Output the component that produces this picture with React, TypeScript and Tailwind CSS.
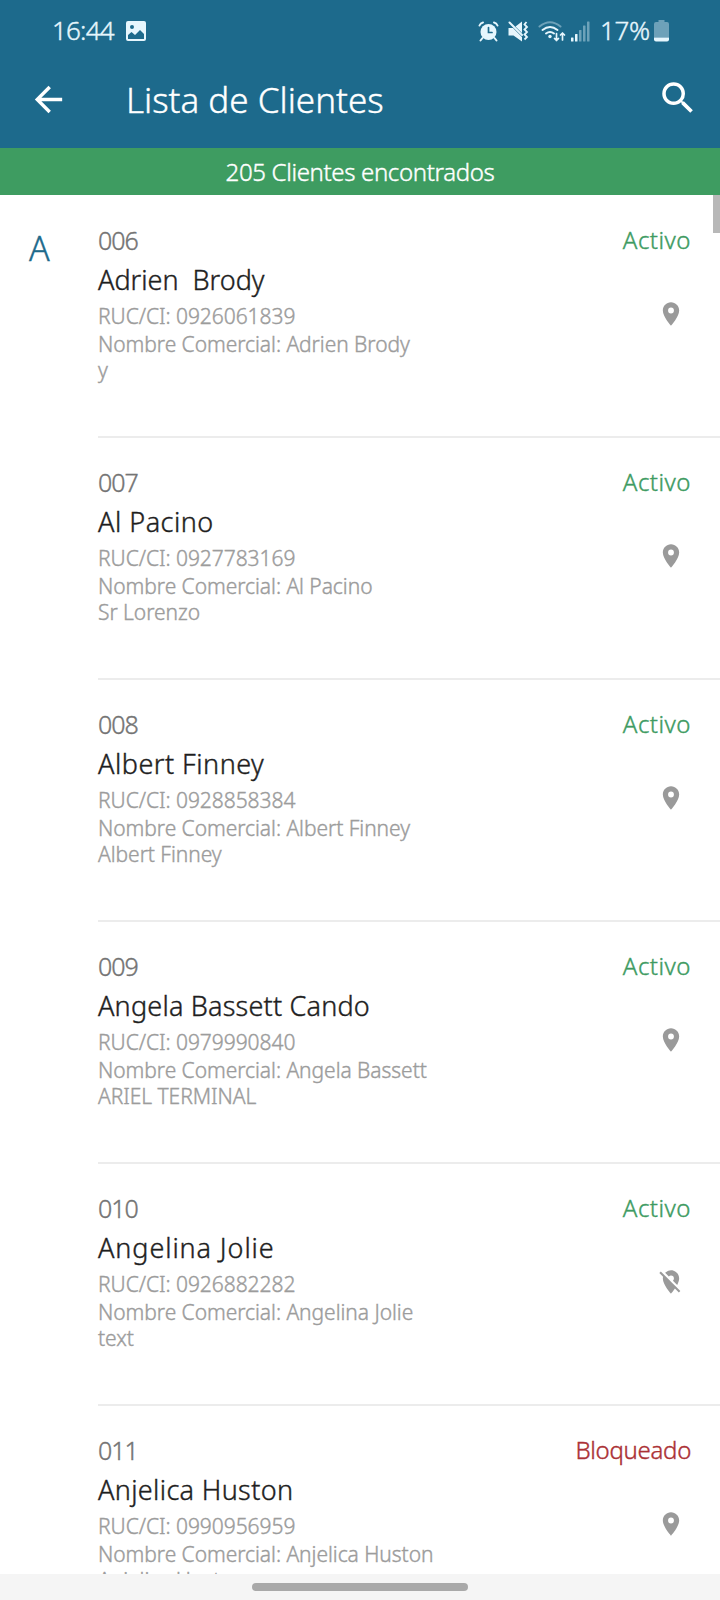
import React from 'react';
import { MdArrowBack, MdLocationOff, MdLocationOn, MdSearch } from 'react-icons/md';

interface Client {
  code: string;
  name: string;
  ruc: string;
  tradeName: string;
  detail: string;
  nameSpacing?: string;
  blocked?: boolean;
  noLocation?: boolean;
}

const clients: Client[] = [
  { code: '006', name: 'Adrien  Brody', ruc: '0926061839', tradeName: 'Adrien Brody', detail: 'y' },
  { code: '007', name: 'Al Pacino', ruc: '0927783169', tradeName: 'Al Pacino', detail: 'Sr Lorenzo', nameSpacing: 'tracking-[0.5px]' },
  { code: '008', name: 'Albert Finney', ruc: '0928858384', tradeName: 'Albert Finney', detail: 'Albert Finney', nameSpacing: 'tracking-[0.5px]' },
  { code: '009', name: 'Angela Bassett Cando', ruc: '0979990840', tradeName: 'Angela Bassett', detail: 'ARIEL TERMINAL', nameSpacing: 'tracking-[0.2px]' },
  { code: '010', name: 'Angelina Jolie', ruc: '0926882282', tradeName: 'Angelina Jolie', detail: 'text', nameSpacing: 'tracking-[0.9px]', noLocation: true },
  { code: '011', name: 'Anjelica Huston', ruc: '0990956959', tradeName: 'Anjelica Huston', detail: 'Anjelica Huston', nameSpacing: 'tracking-[0.35px]', blocked: true },
];

const PictureIcon = () => (
  <svg className="h-5 w-5" viewBox="0 0 20 20">
    <path
      fill="currentColor"
      fillRule="evenodd"
      d="M2 0h16a2 2 0 0 1 2 2v16a2 2 0 0 1-2 2H2a2 2 0 0 1-2-2V2a2 2 0 0 1 2-2ZM6 4a2 2 0 1 0 0 4 2 2 0 0 0 0-4ZM2 14v4h16v-5l-4-4-5 5-3.500-3Z"
    />
  </svg>
);

const AlarmIcon = () => (
  <svg className="h-[21px] w-[21px]" viewBox="0 0 21 21" fill="none" stroke="currentColor" strokeLinecap="round">
    <circle cx="10.500" cy="11" r="8" fill="currentColor" stroke="none" />
    <path strokeWidth="2" d="M1.500 4.500Q2.500 2 5 1.500M19.500 4.500Q18.500 2 16 1.500M4.500 17l-2 2.500M16.500 17l2 2.500" />
    <path className="stroke-[#1d6a8c]" strokeWidth="1.700" d="M10.500 6.500V11.500H14" />
  </svg>
);

const MuteIcon = () => (
  <svg className="h-[21px] w-[21px]" viewBox="0 0 21 21" fill="none" stroke="currentColor">
    <path fill="currentColor" stroke="none" d="M0.500 7h4.500L14 16v4.500L5.500 14.500h-5ZM7.500 5.500 14 0.500v11.500Z" />
    <path strokeWidth="2" strokeLinecap="round" d="M1.500 1.500 14 14" />
    <path strokeWidth="1.800" d="M18.500 1l-2 2.500 2.500 2.500-2.500 2.500 2.500 2.500-2.500 2.500 2.500 2.500-2.500 2.500" />
  </svg>
);

const WifiIcon = () => (
  <svg className="h-[21px] w-[28px]" viewBox="0 0 28 21" fill="none" stroke="currentColor" strokeWidth="2" strokeLinecap="round">
    <path opacity="0.4" d="M1.500 5.500Q12 -3 22.500 5.500" />
    <path d="M4.500 9Q12 3 19.500 9M8 12.500Q12 9.500 16 12.500" />
    <circle cx="12" cy="15.500" r="1.700" fill="currentColor" stroke="none" />
    <path strokeWidth="1.700" strokeLinejoin="round" d="M18.500 12.500v7M16.500 17.500l2 2 2-2M24.500 19v-7M22.500 14l2-2 2 2" />
  </svg>
);

const SignalIcon = () => (
  <svg className="h-[21px] w-[19px]" viewBox="0 0 19 21" fill="currentColor">
    <rect x="0" y="16.500" width="2.500" height="4" rx="0.500" />
    <rect x="4" y="13" width="2.500" height="7.500" rx="0.500" />
    <g opacity="0.4">
      <rect x="8" y="9" width="2.500" height="11.500" rx="0.500" />
      <rect x="12" y="4.500" width="2.500" height="16" rx="0.500" />
      <rect x="16" y="0.500" width="2.500" height="20" rx="0.500" />
    </g>
  </svg>
);

const BatteryIcon = () => (
  <svg className="h-[22px] w-[15px]" viewBox="0 0 15 22" fill="currentColor">
    <path opacity="0.4" d="M4.500 0h6v2H13a2 2 0 0 1 2 2v13.500H0V4a2 2 0 0 1 2-2h2.500Z" />
    <path d="M0 17.500h15v2a2 2 0 0 1-2 2H2a2 2 0 0 1-2-2Z" />
  </svg>
);

const StatusBar = () => (
  <div className="flex h-[60px] items-center pt-[2px] pl-[52px] pr-[51px] text-[#e6f6fd]">
    <span className="-mt-[3px] w-[74px] text-[26px] leading-[30px] tracking-[-0.8px]">16:44</span>
    <PictureIcon />
    <div className="ml-auto flex items-center">
      <AlarmIcon />
      <div className="ml-[9px]"><MuteIcon /></div>
      <div className="ml-[9px]"><WifiIcon /></div>
      <div className="ml-[5px]"><SignalIcon /></div>
      <span className="-mt-[3px] ml-[10px] w-[54px] whitespace-nowrap text-[26px] leading-[30px] tracking-[-0.4px]">17%</span>
      <BatteryIcon />
    </div>
  </div>
);

const ClientRow: React.FC<{ client: Client; letter?: string }> = ({ client, letter }) => {
  const Pin = client.noLocation ? MdLocationOff : MdLocationOn;
  return (
    <li className="flex h-[242px] shrink-0">
      <div className="w-[98px] shrink-0 pt-[29px] pl-[29px] text-[34px] leading-[46px] text-[#1d6a8c]">{letter}</div>
      <div className="flex flex-1 justify-between border-b-2 border-[#ececec] pt-[29px] pr-[29px]">
        <div className="whitespace-pre">
          <p className="text-[25px] leading-[30px] tracking-[-1px] text-[#747474]">{client.code}</p>
          <p className={`pt-[2px] text-[27px] leading-[45px] text-[#1e1e1e] ${client.nameSpacing ?? ''}`}>{client.name}</p>
          <div className="text-[21px] leading-[29px] tracking-[-0.05px] text-[#9c9c9c]">
            <p>RUC/CI: {client.ruc}</p>
            <p className="-mt-px">Nombre Comercial: {client.tradeName}</p>
            <p className="leading-[22px]">{client.detail}</p>
          </div>
        </div>
        <div className="flex flex-col items-end">
          <span
            className={`text-[24px] leading-[30px] ${
              client.blocked ? 'tracking-[-0.3px] text-[#ab3135]' : 'tracking-[0.5px] text-[#3e9b62]'
            }`}
          >
            {client.blocked ? 'Bloqueado' : 'Activo'}
          </span>
          <Pin className="mt-[45px] mr-[6px] h-7 w-7 text-[#9a9a9a]" />
        </div>
      </div>
    </li>
  );
};

export default function App() {
  return (
    <div className="flex h-[1600px] w-[720px] flex-col overflow-hidden bg-white font-['Noto_Sans',sans-serif] font-light [-webkit-text-stroke-width:0.4px]">
      <header className="h-[148px] shrink-0 bg-[#1d6a8c] text-white">
        <StatusBar />
        <div className="flex h-[79px] items-center pl-[28px] pr-[21px]">
          <MdArrowBack className="h-[41px] w-[41px]" />
          <h1 className="ml-[57px] text-[35px] leading-[48px]">Lista de Clientes</h1>
          <MdSearch className="-mt-[3px] ml-auto h-[42px] w-[42px]" />
        </div>
      </header>
      <div className="h-[47px] shrink-0 bg-[#3e9c61] text-center text-[24px] leading-[48px] tracking-[-0.35px] text-white">
        205 Clientes encontrados
      </div>
      <main className="relative min-h-0 flex-1 overflow-hidden pt-px">
        <ul>
          {clients.map((client, i) => (
            <ClientRow key={client.code} client={client} letter={i === 0 ? 'A' : undefined} />
          ))}
        </ul>
        <div className="absolute top-0 right-0 h-[38px] w-[7px] bg-[#b8b8b8]" />
      </main>
      <footer className="flex h-[26px] shrink-0 justify-center bg-[#f5f5f5] pt-[9px]">
        <div className="h-2 w-[216px] rounded-full bg-[#a9a9a9]" />
      </footer>
    </div>
  );
}
